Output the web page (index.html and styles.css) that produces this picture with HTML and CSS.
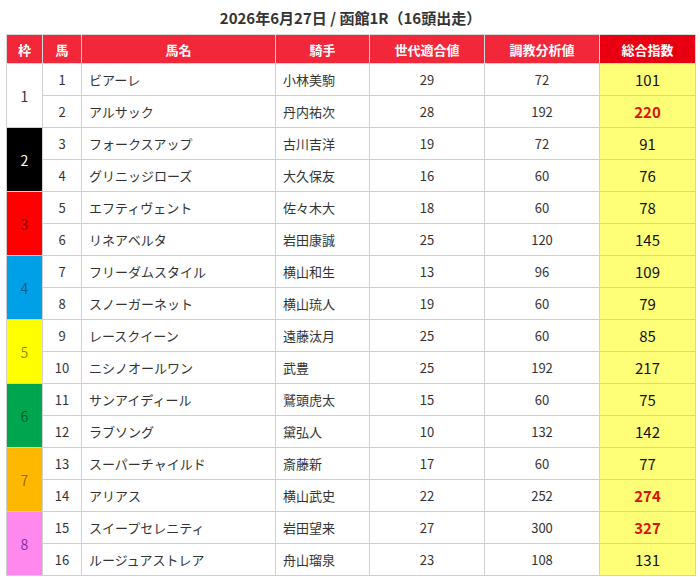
FILE: index.html
```html
<!DOCTYPE html>
<html lang="ja">
<head>
<meta charset="utf-8">
<link rel="stylesheet" href="styles.css">
</head>
<body>
<div class="wrap">
  <h1 class="title">2026年6月27日 / 函館1R（16頭出走）</h1>
  <table class="race">
    <colgroup>
      <col class="c-waku"><col class="c-uma"><col class="c-name"><col class="c-jockey"><col class="c-sedai"><col class="c-chokyo"><col class="c-total">
    </colgroup>
    <thead>
      <tr><th>枠</th><th>馬</th><th>馬名</th><th>騎手</th><th>世代適合値</th><th>調教分析値</th><th class="th-total">総合指数</th></tr>
    </thead>
    <tbody>
      <tr><td rowspan="2" class="waku w1">1</td><td class="num">1</td><td class="name">ビアーレ</td><td class="name">小林美駒</td><td class="num">29</td><td class="num">72</td><td class="total">101</td></tr>
      <tr><td class="num">2</td><td class="name">アルサック</td><td class="name">丹内祐次</td><td class="num">28</td><td class="num">192</td><td class="total hi">220</td></tr>
      <tr><td rowspan="2" class="waku w2">2</td><td class="num">3</td><td class="name">フォークスアップ</td><td class="name">古川吉洋</td><td class="num">19</td><td class="num">72</td><td class="total">91</td></tr>
      <tr><td class="num">4</td><td class="name">グリニッジローズ</td><td class="name">大久保友</td><td class="num">16</td><td class="num">60</td><td class="total">76</td></tr>
      <tr><td rowspan="2" class="waku w3">3</td><td class="num">5</td><td class="name">エフティヴェント</td><td class="name">佐々木大</td><td class="num">18</td><td class="num">60</td><td class="total">78</td></tr>
      <tr><td class="num">6</td><td class="name">リネアベルタ</td><td class="name">岩田康誠</td><td class="num">25</td><td class="num">120</td><td class="total">145</td></tr>
      <tr><td rowspan="2" class="waku w4">4</td><td class="num">7</td><td class="name">フリーダムスタイル</td><td class="name">横山和生</td><td class="num">13</td><td class="num">96</td><td class="total">109</td></tr>
      <tr><td class="num">8</td><td class="name">スノーガーネット</td><td class="name">横山琉人</td><td class="num">19</td><td class="num">60</td><td class="total">79</td></tr>
      <tr><td rowspan="2" class="waku w5">5</td><td class="num">9</td><td class="name">レースクイーン</td><td class="name">遠藤汰月</td><td class="num">25</td><td class="num">60</td><td class="total">85</td></tr>
      <tr><td class="num">10</td><td class="name">ニシノオールワン</td><td class="name">武豊</td><td class="num">25</td><td class="num">192</td><td class="total">217</td></tr>
      <tr><td rowspan="2" class="waku w6">6</td><td class="num">11</td><td class="name">サンアイディール</td><td class="name">鷲頭虎太</td><td class="num">15</td><td class="num">60</td><td class="total">75</td></tr>
      <tr><td class="num">12</td><td class="name">ラブソング</td><td class="name">黛弘人</td><td class="num">10</td><td class="num">132</td><td class="total">142</td></tr>
      <tr><td rowspan="2" class="waku w7">7</td><td class="num">13</td><td class="name">スーパーチャイルド</td><td class="name">斎藤新</td><td class="num">17</td><td class="num">60</td><td class="total">77</td></tr>
      <tr><td class="num">14</td><td class="name">アリアス</td><td class="name">横山武史</td><td class="num">22</td><td class="num">252</td><td class="total hi">274</td></tr>
      <tr><td rowspan="2" class="waku w8">8</td><td class="num">15</td><td class="name">スイープセレニティ</td><td class="name">岩田望来</td><td class="num">27</td><td class="num">300</td><td class="total hi">327</td></tr>
      <tr><td class="num">16</td><td class="name">ルージュアストレア</td><td class="name">舟山瑠泉</td><td class="num">23</td><td class="num">108</td><td class="total">131</td></tr>
    </tbody>
  </table>
</div>
</body>
</html>
```

FILE: styles.css
```css
html, body {
  margin: 0;
  padding: 0;
  background: #fff;
}
body {
  font-family: "Noto Sans CJK JP", "Noto Sans", sans-serif;
  color: #333;
}
.wrap {
  padding: 0 5px 0 6px;
}
.title {
  margin: 0;
  height: 34px;
  line-height: 36px;
  font-size: 15px;
  font-weight: bold;
  text-align: center;
  color: #333;
}
.race {
  width: 689px;
  border-collapse: collapse;
  table-layout: fixed;
}
.c-waku { width: 36px; }
.c-uma { width: 39px; }
.c-name { width: 194px; }
.c-jockey { width: 94px; }
.c-sedai { width: 115px; }
.c-chokyo { width: 115px; }
.c-total { width: 96px; }
.race th {
  background: #f2273a;
  color: #fff;
  font-size: 13px;
  font-weight: bold;
  height: 28px;
  padding: 0;
  border: 1px solid #d9d9d9;
  text-align: center;
}
.race th.th-total {
  background: #e80012;
}
.race td {
  height: 31px;
  padding: 0;
  border: 1px solid #d0d0d0;
  font-size: 13px;
  color: #333;
  text-align: center;
}
.race td.name {
  text-align: left;
  padding-left: 7px;
}
.race td.total {
  background: #ffff77;
  font-size: 15px;
  color: #111;
}
.race td.total.hi {
  color: #dd1100;
  font-weight: bold;
}
.race td.waku {
  font-size: 14px;
  color: rgba(0, 0, 0, 0.45);
}
.race td.w1 { background: #fff; color: #333; }
.race td.w2 { background: #000; color: #fff; }
.race td.w3 { background: #ff0000; color: rgba(120, 0, 0, 0.9); }
.race td.w4 { background: #00a0e9; }
.race td.w5 { background: #ffff00; }
.race td.w6 { background: #00a550; }
.race td.w7 { background: #ffb800; }
.race td.w8 { background: #ff88ee; color: rgba(80, 0, 120, 0.7); }
```
